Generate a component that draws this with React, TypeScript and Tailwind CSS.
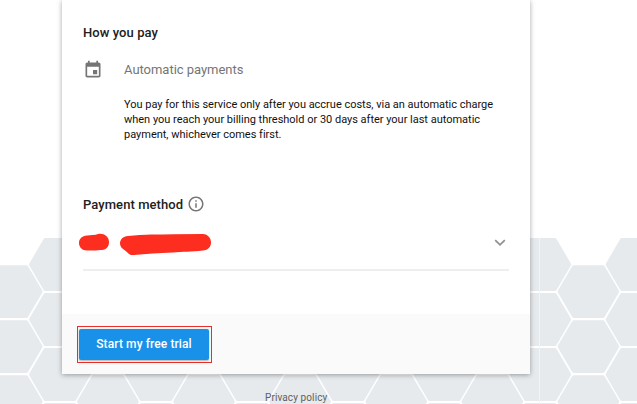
import React from "react";

const HEX_POINTS = "-28.2,0 -14.2,-23.9 14.2,-23.9 28.2,0 14.2,23.9 -14.2,23.9";

function HoneycombBackdrop() {
  const cells: { x: number; y: number }[] = [];
  for (let column = 0; column < 14; column++) {
    for (let row = 0; row < 4; row++) {
      cells.push({
        x: 11.8 + column * 48.05,
        y: (column % 2 === 0 ? 291.6 : 264.5) + row * 55,
      });
    }
  }
  return (
    <svg className="absolute inset-0" width="637" height="404" viewBox="0 0 637 404" aria-hidden="true">
      {cells.map(({ x, y }) => (
        <polygon
          key={`${x}-${y}`}
          points={HEX_POINTS}
          transform={`translate(${x} ${y})`}
          fill="#e6eaed"
          stroke="#e6eaed"
          strokeWidth="5"
          strokeLinejoin="round"
        />
      ))}
      <path d="M539.5 238V404" stroke="#f2f4f6" />
    </svg>
  );
}

function CalendarIcon() {
  return (
    <svg className="size-5 shrink-0" viewBox="0 0 24 24" fill="#757575">
      <path d="M17 12h-5v5h5v-5zM16 1v2H8V1H6v2H5c-1.11 0-1.99.9-1.99 2L3 19c0 1.1.89 2 2 2h14c1.1 0 2-.9 2-2V5c0-1.1-.9-2-2-2h-1V1h-2zm3 18H5V8h14v11z" />
    </svg>
  );
}

function InfoIcon() {
  return (
    <svg className="mb-[2px] size-[18px]" viewBox="0 0 24 24" fill="#757575">
      <path d="M11 17h2v-6h-2v6zm1-15C6.48 2 2 6.48 2 12s4.48 10 10 10 10-4.48 10-10S17.52 2 12 2zm0 18c-4.41 0-8-3.59-8-8s3.59-8 8-8 8 3.59 8 8-3.59 8-8 8zM11 9h2V7h-2v2z" />
    </svg>
  );
}

function Redaction() {
  return (
    <svg className="-ml-1 h-6 w-[134px]" viewBox="0 0 134 24" fill="#fd2d20">
      <path d="M8 3.6C12 2.8 16 3.3 19 2C24 .6 30 4 30 10C30 15.5 26.500 18 22 18C17 18.400 13 18.600 8 18.500C3 18.500 0 15 0 11C0 7 3 4 8 3.600Z" />
      <path d="M49 4C65 2.400 80 2.400 95 2.200L124 2C129 2.300 132 6 132 10.500C132 15 129 18 124 18.600C112 20 104 19.700 94 20.500C80 21.300 67 21.800 55 23C50 23.400 49 20.500 46 18.400C42.500 16.500 41 14 41 11.500C41 7.500 44 4.300 49 4Z" />
    </svg>
  );
}

export default function App() {
  return (
    <div className="relative h-[404px] w-[637px] overflow-hidden bg-white font-['Roboto','Noto_Sans',sans-serif] text-[#212121]">
      <HoneycombBackdrop />
      <div className="relative flex flex-col">
        <main className="ml-[62px] flex h-[374px] w-[468px] flex-col bg-white shadow-[0_1px_5px_rgba(0,0,0,0.35)]">
          <section className="h-[314px] pt-[23px] pr-[21px] pl-[21px]">
            <h2 className="text-[13px] leading-5 font-medium tracking-[0.07px]">How you pay</h2>
            <div className="mt-[17px] flex h-5 items-center gap-[21px]">
              <CalendarIcon />
              <span className="text-[13px] leading-5 tracking-[-0.03px] text-[#757575]">Automatic payments</span>
            </div>
            <p className="mt-[17px] ml-[41px] text-[11px] leading-[15px] tracking-[-0.012px] whitespace-nowrap text-[#111111]">
              You pay for this service only after you accrue costs, via an automatic charge
              <br />
              when you reach your billing threshold or 30 days after your last automatic
              <br />
              payment, whichever comes first.
            </p>
            <div className="mt-[53px] flex h-5 items-center gap-1">
              <h2 className="text-[13px] leading-5 font-medium tracking-[0.07px]">Payment method</h2>
              <InfoIcon />
            </div>
            <div className="mt-[17px] flex h-[39px] items-start justify-between border-b-2 border-[#eeeeee]">
              <Redaction />
              <svg className="mt-[7px] mr-[3px] h-2 w-3" viewBox="0 0 12 8" fill="none" stroke="#919191" strokeWidth="1.8">
                <path d="M1.200 1.200L6 5.800L10.800 1.200" />
              </svg>
            </div>
          </section>
          <footer className="flex h-[60px] bg-[#fafafa] pt-3 pl-[15px]">
            <div className="h-[37px] w-[135px] border border-[#e8302a] p-px pt-[2px]">
              <button className="h-[31px] w-[130px] rounded-[2px] bg-[#1a91e9] pb-px text-[12px] font-medium tracking-[0.1px] text-white shadow-[0_1px_2px_rgba(0,0,0,0.3)]">
                Start my free trial
              </button>
            </div>
          </footer>
        </main>
        <a className="mt-4 ml-[265px] self-start text-[10px] leading-[15px] tracking-[0.1px] text-[#616161]">Privacy policy</a>
      </div>
    </div>
  );
}
